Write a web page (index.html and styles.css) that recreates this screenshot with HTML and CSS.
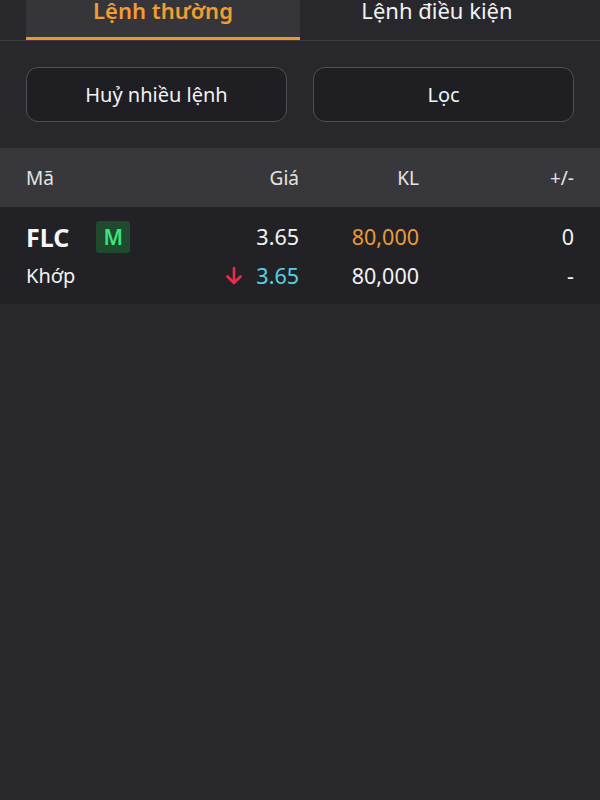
FILE: index.html
```html
<!DOCTYPE html>
<html lang="vi">
<head>
    <meta charset="UTF-8">
    <meta name="viewport" content="width=device-width, initial-scale=1.0">
    <title>Sổ lệnh</title>
    <link rel="stylesheet" href="styles.css">
</head>
<body>
    <div class="tabs">
        <div class="tab active">Lệnh thường</div>
        <div class="tab">Lệnh điều kiện</div>
    </div>

    <div class="actions">
        <button class="action-btn">Huỷ nhiều lệnh</button>
        <button class="action-btn">Lọc</button>
    </div>

    <!-- Order table -->
    <div class="table-head">
        <div class="col-code">Mã</div>
        <div class="col-num">Giá</div>
        <div class="col-num">KL</div>
        <div class="col-num">+/-</div>
    </div>

    <div class="order-row">
        <div class="col-code">
            <span class="symbol">FLC</span>
            <span class="badge">M</span>
        </div>
        <div class="col-num">3.65</div>
        <div class="col-num qty">80,000</div>
        <div class="col-num">0</div>

        <div class="col-code status">Khớp</div>
        <div class="col-num">
            <svg class="arrow" width="16" height="18" viewBox="0 0 16 18">
                <path d="M8 1 V16 M1.5 9.5 L8 16 L14.5 9.5" fill="none" stroke="#ee2a4c" stroke-width="2.6" stroke-linecap="round" stroke-linejoin="round"/>
            </svg>
            <span class="matched">3.65</span>
        </div>
        <div class="col-num">80,000</div>
        <div class="col-num">-</div>
    </div>
</body>
</html>
```

FILE: styles.css
```css
body {
    margin: 0;
    padding: 0;
    background-color: #28282c;
    color: #f2f2f2;
    font-family: "Noto Sans", "Open Sans", sans-serif;
    height: 800px;
    overflow: hidden;
}

/* Tabs */
.tabs {
    display: flex;
    padding: 0 26px;
    height: 41px;
    border-bottom: 1px solid #3b3b40;
    box-sizing: border-box;
}

.tab {
    flex: 1;
    text-align: center;
    font-size: 22px;
    line-height: 20px;
    color: #f2f2f2;
    height: 40px;
    box-sizing: border-box;
}

.tab.active {
    background-color: #36363a;
    color: #f29d2f;
    font-weight: 600;
    border-bottom: 3px solid #ec962c;
    line-height: 20px;
}

/* Action buttons */
.actions {
    display: flex;
    gap: 26px;
    padding: 26px 26px 26px;
}

.action-btn {
    flex: 1;
    height: 55px;
    background-color: #1f1f23;
    border: 1.5px solid #4f4f55;
    border-radius: 12px;
    color: #f2f2f2;
    font-family: inherit;
    font-size: 20px;
    cursor: pointer;
}

/* Table */
.table-head,
.order-row {
    display: grid;
    grid-template-columns: 153px 120px 120px 155px;
    padding: 0 26px;
}

.table-head {
    background-color: #38383c;
    height: 59px;
    align-items: center;
    font-size: 19px;
    color: #e4e4e4;
}

.order-row {
    background-color: #222226;
    padding-top: 10px;
    padding-bottom: 9px;
    grid-auto-rows: 39px;
    align-items: center;
    font-size: 21.5px;
}

.col-num {
    text-align: right;
    display: flex;
    justify-content: flex-end;
    align-items: center;
}

.col-code {
    display: flex;
    align-items: center;
}

.symbol {
    font-size: 25px;
    font-weight: 700;
    color: #f7f7f7;
}

.badge {
    display: inline-block;
    margin-left: 27px;
    width: 34px;
    height: 32px;
    line-height: 32px;
    text-align: center;
    background-color: #1e4a2d;
    color: #3ee47c;
    font-size: 21px;
    font-weight: 600;
    border-radius: 3px;
}

.status {
    font-size: 20px;
}

.qty {
    color: #ec9a38;
}

.arrow {
    margin-right: 14px;
}

.matched {
    color: #55d2e2;
}
```
